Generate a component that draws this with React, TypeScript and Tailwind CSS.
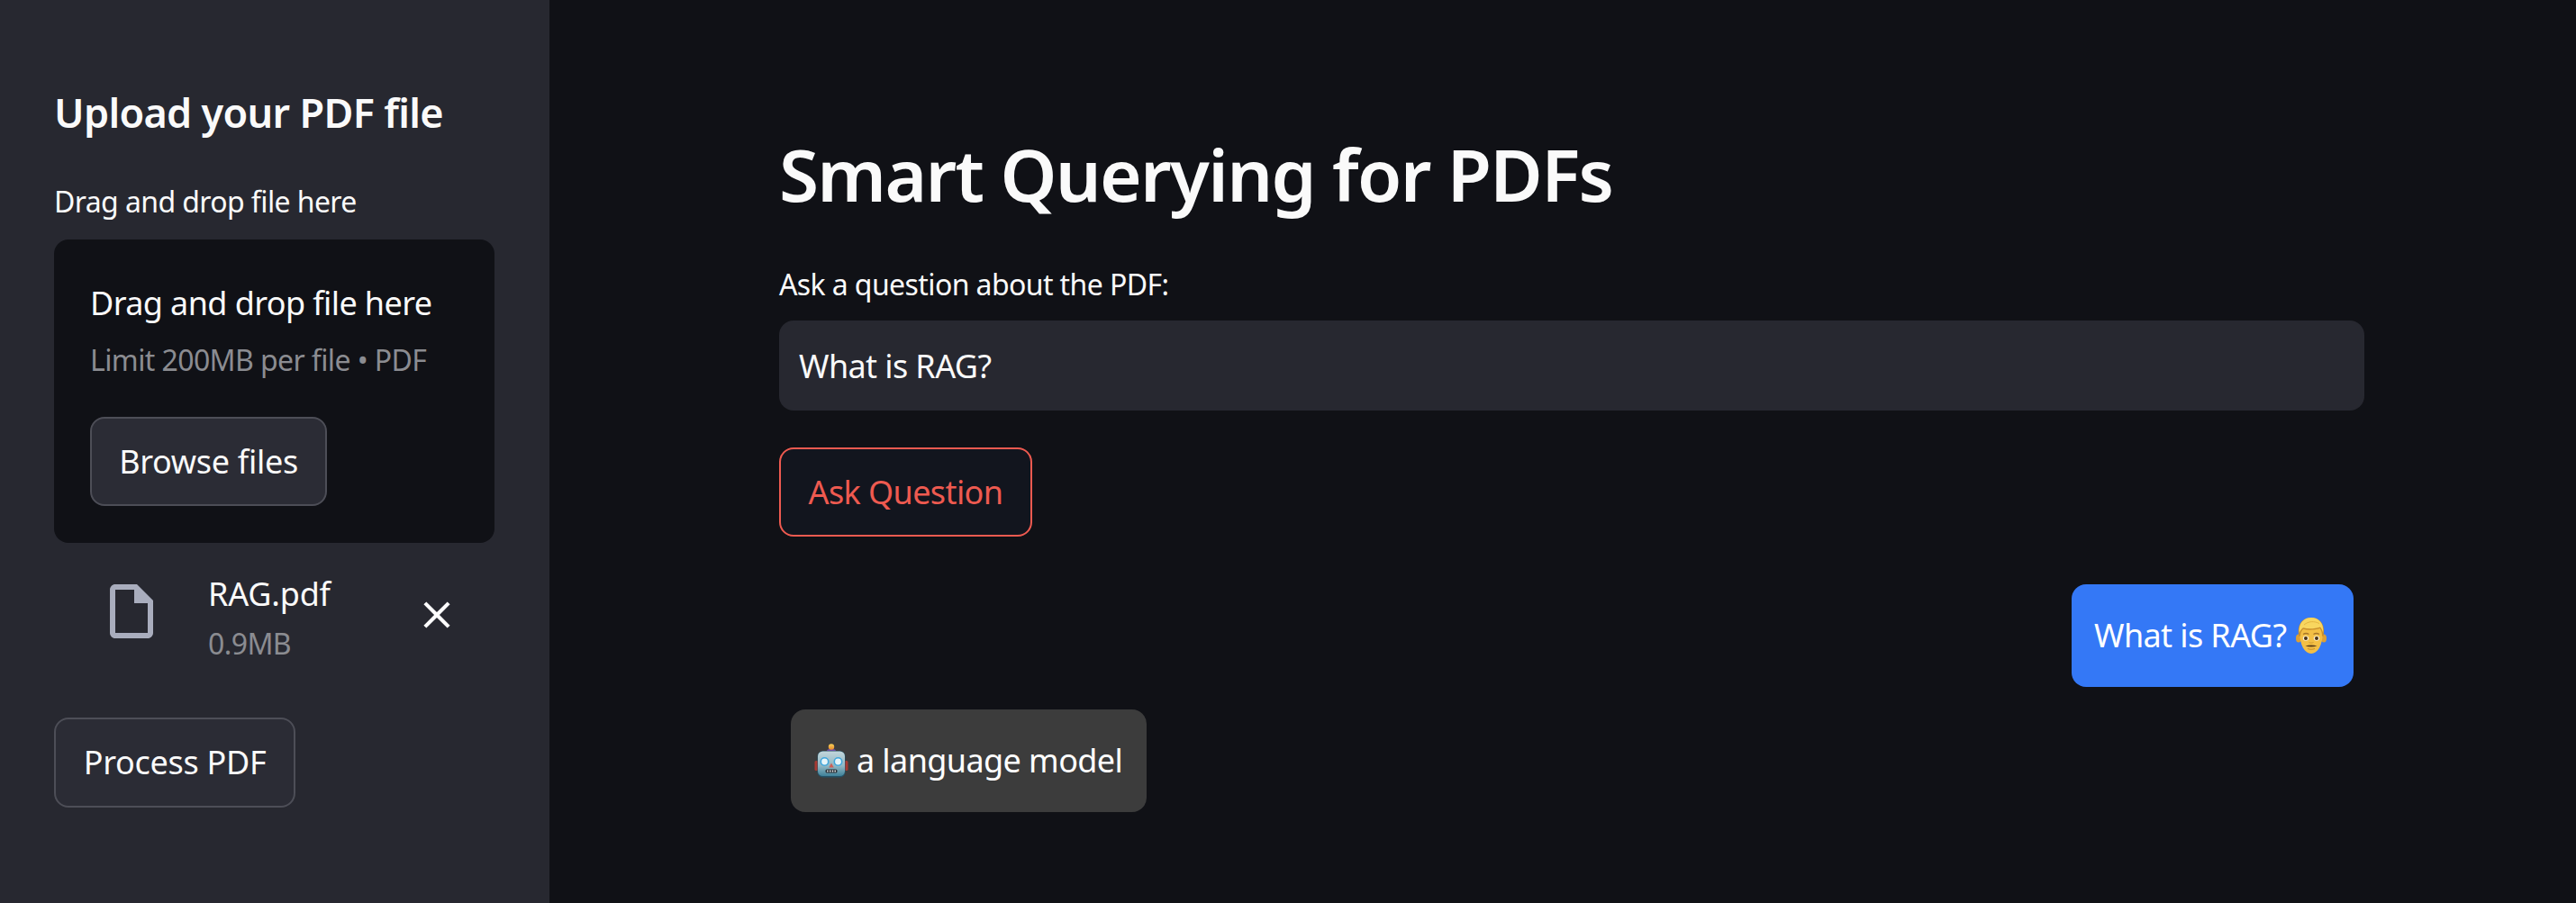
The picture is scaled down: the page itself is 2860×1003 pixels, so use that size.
import { MdOutlineInsertDriveFile, MdClose } from "react-icons/md";

const ManEmoji = () => (
  <svg viewBox="0 0 34 40" className="w-[34px] h-[40px] shrink-0">
    <ellipse cx="3" cy="23" rx="3" ry="4.500" fill="#dda034" />
    <ellipse cx="31" cy="23" rx="3" ry="4.500" fill="#dda034" />
    <path d="M4 14c0 17 6 26 13 26s13-9 13-26S4 3 4 14z" fill="#f3bf45" />
    <path d="M3.500 21C0.500 7 8 0 17 0s16.500 7 13.500 21l-1.500-.5c0-3.500-.6-6-2.300-8.500-6 1.800-12.700 2.300-18.700.8C6 15 5 17.500 5 20.500z" fill="#c98f2c" />
    <path d="M3.800 17C2.500 6 9 0 17 0s14.500 6 13.200 17c-.6-2.500-1.600-5-3.200-6.500-6 2-13 2.300-19 .8C6 13 4.600 15 3.800 17z" fill="#f8d65f" />
    <path d="M9 8c5-4 11-4.500 17-1.500" stroke="#e6b640" strokeWidth="1" fill="none" />
    <path d="M8 18.500c2-1.200 4.500-1.200 6.500 0M19.500 18.500c2-1.200 4.500-1.200 6.500 0" stroke="#a8772a" strokeWidth="1.300" fill="none" />
    <ellipse cx="11" cy="23" rx="3.200" ry="2.800" fill="#fdf3d8" />
    <ellipse cx="23" cy="23" rx="3.200" ry="2.800" fill="#fdf3d8" />
    <circle cx="11" cy="23" r="2" fill="#4a3216" />
    <circle cx="23" cy="23" r="2" fill="#4a3216" />
    <path d="M14.500 27.500c1.600.8 3.400.8 5 0" stroke="#cf9a30" strokeWidth="1" fill="none" />
    <path d="M10.500 31.500c4-1.500 9-1.500 13 0-4 1.300-9 1.300-13 0z" fill="#5a3d18" />
    <path d="M13 34.500c2.500 1 5.500 1 8 0" stroke="#c98f2c" strokeWidth="1" fill="none" />
  </svg>
);

const RobotEmoji = () => (
  <svg viewBox="0 0 38 38" className="w-[38px] h-[38px] shrink-0">
    <defs>
      <linearGradient id="robotHead" x1="0" y1="0" x2="0" y2="1">
        <stop offset="0" stopColor="#c2d6db" />
        <stop offset="0.6" stopColor="#8fb6c2" />
        <stop offset="1" stopColor="#3f8199" />
      </linearGradient>
      <linearGradient id="robotBulb" x1="0" y1="0" x2="0" y2="1">
        <stop offset="0" stopColor="#f7cf57" />
        <stop offset="1" stopColor="#e88a2e" />
      </linearGradient>
    </defs>
    <rect x="0.500" y="19" width="4" height="11" rx="1.500" fill="#a63a32" />
    <rect x="33.500" y="19" width="4" height="11" rx="1.500" fill="#a63a32" />
    <path d="M14 8c0-3 10-3 10 0v1.500H14z" fill="#6d4fa3" />
    <circle cx="19" cy="3.500" r="3.200" fill="url(#robotBulb)" />
    <rect x="3.500" y="8" width="31" height="29.500" rx="6" fill="#245166" />
    <rect x="4" y="8.500" width="30" height="27.500" rx="5.500" fill="url(#robotHead)" />
    <circle cx="11.500" cy="20" r="4.200" fill="#e6f5f9" stroke="#3fa6dc" strokeWidth="1.600" />
    <circle cx="26.500" cy="20" r="4.200" fill="#e6f5f9" stroke="#3fa6dc" strokeWidth="1.600" />
    <path d="M19 21.500l2.800 5h-5.600z" fill="#cf5f55" />
    <rect x="12.500" y="28.500" width="13" height="4" rx="1.500" fill="#2a3036" />
    <path d="M14.200 30.500h1.400M17 30.500h1.400M19.800 30.500h1.400M22.500 30.500h1.400" stroke="#e4e8ea" strokeWidth="1.800" />
  </svg>
);

export default function App() {
  return (
    <div className="flex h-screen w-full bg-[#101116] text-white font-['Noto_Sans',sans-serif] overflow-hidden">
      {/* sidebar */}
      <aside className="w-[610px] shrink-0 bg-[#272830] px-[60px] pt-[94px]">
        <h2 className="text-[45px] leading-[62px] font-semibold tracking-[-0.7px] text-[#fafafa]">Upload your PDF file</h2>
        <p className="mt-[48px] text-[32px] leading-[40px] tracking-[-0.6px] text-[#fafafa]">Drag and drop file here</p>
        <div className="mt-[22px] w-[489px] h-[337px] rounded-[16px] bg-[#101116] px-[40px] pt-[48px]">
          <p className="text-[36px] leading-[46px] tracking-[-0.6px] text-[#fafafa]">Drag and drop file here</p>
          <p className="mt-[20px] text-[32px] leading-[40px] tracking-[-0.6px] text-[#8b8c91]">Limit 200MB per file • PDF</p>
          <button className="mt-[43px] w-[263px] h-[99px] rounded-[16px] border-2 border-[#4d4e57] bg-[#2b2c35] text-[36px] tracking-[-0.3px] text-[#fafafa]">Browse files</button>
        </div>
        <div className="flex items-start mt-[34px] pl-[50px]">
          <MdOutlineInsertDriveFile className="mt-[6px] text-[#a9adbd] shrink-0" size={72} />
          <div className="ml-[49px] w-[229px]">
            <p className="text-[36px] leading-[46px] tracking-[-0.2px] text-[#fafafa]">RAG.pdf</p>
            <p className="mt-[12px] text-[32px] leading-[40px] tracking-[-0.6px] text-[#8b8c91]">0.9MB</p>
          </div>
          <MdClose className="mt-[21px] text-white shrink-0" size={50} />
        </div>
        <button className="block mt-[62px] w-[268px] h-[100px] rounded-[16px] border-2 border-[#4d4e57] bg-[#2b2c35] text-[36px] tracking-[-0.3px] text-[#fafafa]">Process PDF</button>
      </aside>

      {/* main column */}
      <main className="flex-1 pl-[255px] pr-[235px] pt-[138px]">
        <h1 className="text-[80px] leading-[110px] font-semibold tracking-[-1.7px] text-[#fafafa]">Smart Querying for PDFs</h1>
        <p className="mt-[48px] text-[32px] leading-[40px] tracking-[-0.6px] text-[#fafafa]">Ask a question about the PDF:</p>
        <input
          readOnly
          value="What is RAG?"
          className="mt-[20px] block w-full h-[100px] rounded-[16px] bg-[#272830] px-[22px] text-[36px] tracking-[-0.6px] text-[#fafafa] outline-none"
        />
        <button className="block mt-[41px] w-[281px] h-[99px] rounded-[16px] border-2 border-[#ee5a50] bg-[#12151e] text-[36px] tracking-[-0.6px] text-[#ee5a50]">Ask Question</button>
        <div className="flex justify-end mt-[53px] pr-[12px]">
          <div className="flex items-center gap-[11px] h-[114px] w-[313px] rounded-[16px] bg-[#3478f6] pl-[25px] text-[36px] tracking-[-0.6px]">
            What is RAG? <ManEmoji />
          </div>
        </div>
        <div className="flex mt-[25px] ml-[13px]">
          <div className="flex items-center gap-[9px] h-[114px] w-[395px] rounded-[16px] bg-[#3c3c3c] pl-[26px] text-[36px] tracking-[-0.6px]">
            <RobotEmoji /> a language model
          </div>
        </div>
      </main>
    </div>
  );
}
